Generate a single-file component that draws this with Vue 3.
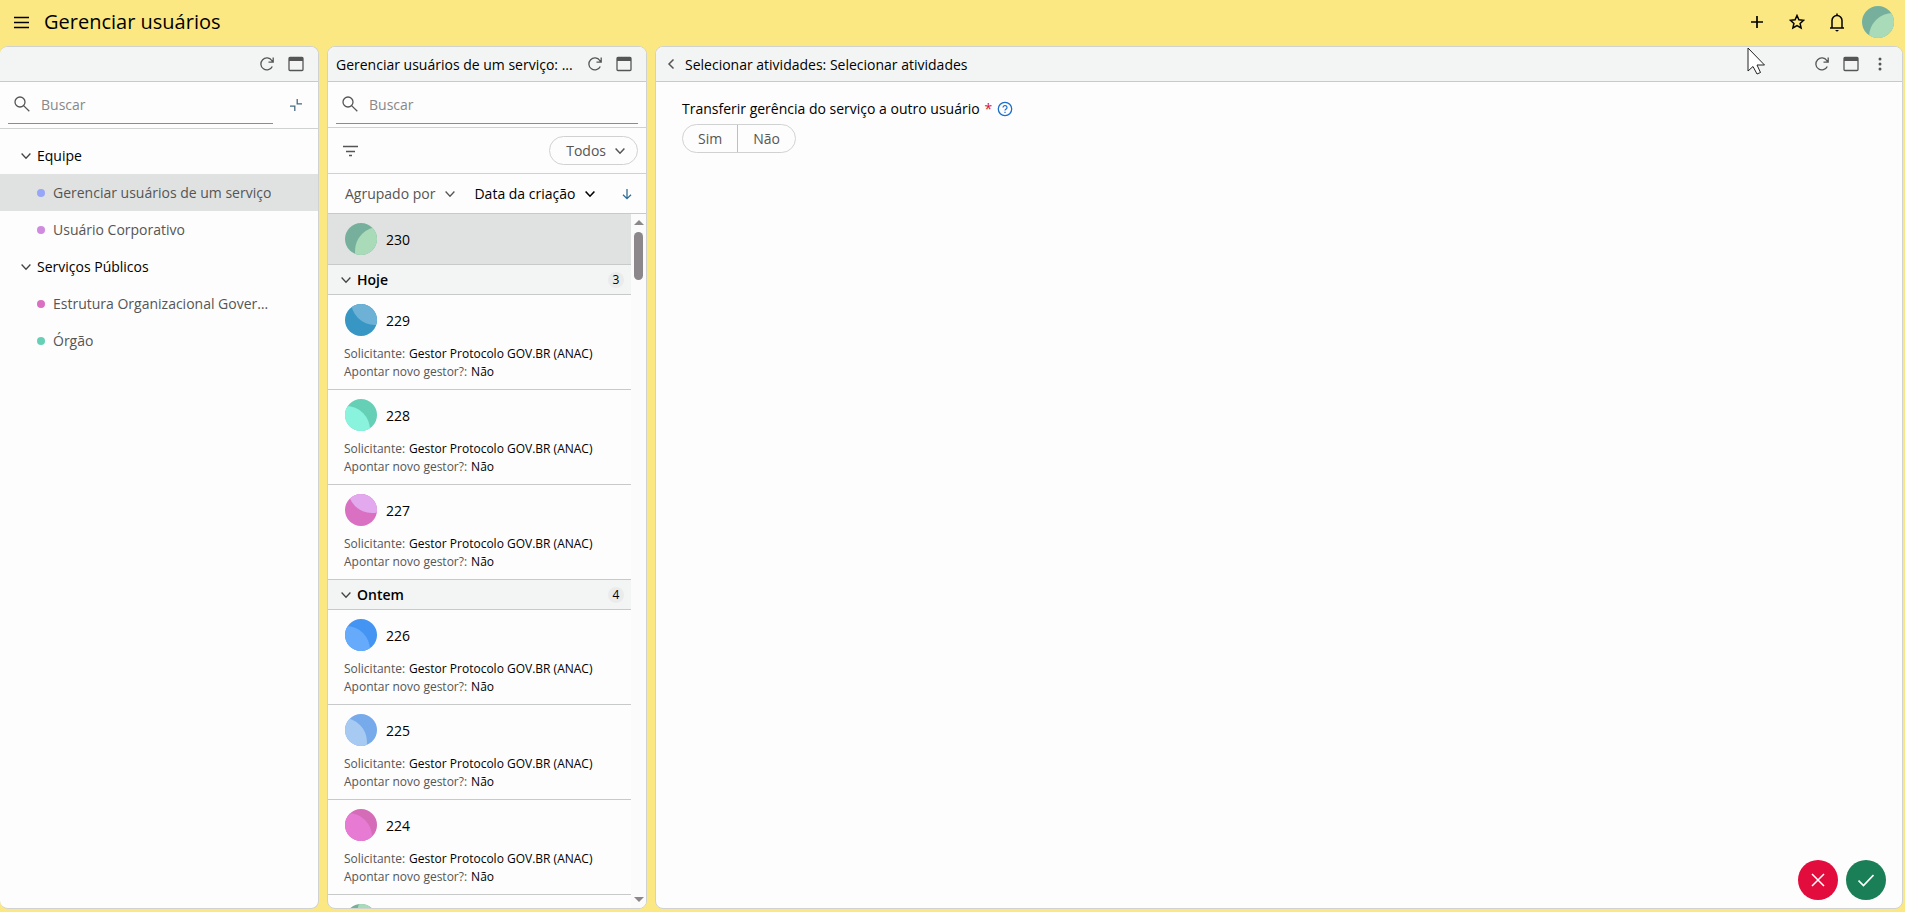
<script setup>

  import { ref } from 'vue';

  const treeSearch = ref('')
  const listSearch = ref('')
  const transfer = ref(null)
  const selectedService = ref('Gerenciar usuários de um serviço')

  const tree = ref([
    {
      name: 'Equipe',
      open: true,
      services: [
        { name: 'Gerenciar usuários de um serviço', color: '#97a6f8' },
        { name: 'Usuário Corporativo', color: '#cf8be0' }
      ]
    },
    {
      name: 'Serviços Públicos',
      open: true,
      services: [
        { name: 'Estrutura Organizacional Governamental', color: '#da70c2' },
        { name: 'Órgão', color: '#66d0b6' }
      ]
    }
  ])

  // x / y : centre of the lighter disc inside the avatar
  const current = { id: 230, dark: '#76b09d', light: '#a9dbb9', x: 34, y: 28 }

  const groups = ref([
    {
      name: 'Hoje',
      count: 3,
      open: true,
      items: [
        { id: 229, dark: '#3796c4', light: '#6eb1d6', x: 30, y: -3 },
        { id: 228, dark: '#66d0b6', light: '#8af3de', x: 1, y: 31 },
        { id: 227, dark: '#da70c2', light: '#e3a9ee', x: 27, y: -5 }
      ]
    },
    {
      name: 'Ontem',
      count: 4,
      open: true,
      items: [
        { id: 226, dark: '#4394f3', light: '#66abfb', x: 1, y: 31 },
        { id: 225, dark: '#76aaeb', light: '#a6caf1', x: -2, y: 28 },
        { id: 224, dark: '#d46cb8', light: '#e77ad3', x: 3, y: 28 },
        { id: 223, dark: '#76b09d', light: '#a9dbb9', x: 36, y: 10 }
      ]
    }
  ])

</script>

<template>

  <div class="app">

    <header class="topbar">
      <button class="icon-btn" aria-label="Menu">
        <svg width="16" height="16" viewBox="0 0 16 16"><path d="M0 3.500h15M0 8.500h15M0 13.500h15" /></svg>
      </button>
      <h1>Gerenciar usuários</h1>
      <nav class="top-actions">
        <button class="icon-btn" aria-label="Adicionar">
          <svg width="16" height="16" viewBox="0 0 16 16"><path d="M8 2v12M2 8h12" stroke-width="1.7" /></svg>
        </button>
        <button class="icon-btn" aria-label="Favoritos">
          <svg width="16" height="16" viewBox="0 0 16 16"><path d="M8 1.500L9.900 5.800l4.700.5-3.500 3.100 1 4.600L8 11.600 3.900 14l1-4.600L1.400 6.300l4.700-.5z" stroke-width="1.500" /></svg>
        </button>
        <button class="icon-btn" aria-label="Notificações">
          <svg width="16" height="20" viewBox="0 0 16 20"><path d="M1 16h14M3 16V8.500a5 5 0 0 1 10 0V16M8 3.500V1.500" stroke-width="1.500" /><path d="M6 18h4l-2 1.800z" fill="currentColor" stroke="none" /></svg>
        </button>
        <svg class="avatar" width="32" height="32" viewBox="0 0 32 32">
          <rect width="32" height="32" fill="#76b09d" />
          <circle cx="31" cy="31" r="24" fill="#a9dbb9" />
        </svg>
      </nav>
    </header>

    <main class="panels">

      <section class="panel panel-first">
        <div class="panel-head">
          <h2></h2>
          <button class="icon-btn" aria-label="Atualizar">
            <svg width="16" height="16" viewBox="0 0 16 16"><path d="M13.300 10.500A6 6 0 1 1 12.800 4.500L14 6M14.200 1.500V6.200H9.500" /></svg>
          </button>
          <button class="icon-btn" aria-label="Maximizar">
            <svg width="16" height="16" viewBox="0 0 16 16"><rect x="1" y="1.500" width="14" height="13" rx="1" /><path d="M1 3.200h14" stroke-width="3.500" /></svg>
          </button>
        </div>

        <div class="search-row">
          <label class="search">
            <svg width="16" height="16" viewBox="0 0 16 16"><circle cx="6" cy="6" r="5" /><path d="M9.600 9.600L15.300 15.300" /></svg>
            <input type="text" v-model="treeSearch" placeholder="Buscar" aria-label="Buscar serviço">
          </label>
          <button class="icon-btn collapse" aria-label="Recolher">
            <svg width="12" height="12" viewBox="0 0 12 12"><path d="M7.200 0v4.800H12M0 7.200h4.800V12" /></svg>
          </button>
        </div>

        <div class="tree">
          <div v-for="group in tree" :key="group.name">
            <button class="tree-group" v-on:click="group.open = !group.open">
              <svg width="10" height="10" viewBox="0 0 10 10"><path d="M.6 2.500L5 7.200l4.400-4.700" /></svg>
              {{ group.name }}
            </button>
            <template v-if="group.open">
              <button
              v-for="service in group.services"
              :key="service.name"
              class="tree-item"
              :class="{ 'tree-item-selected': service.name == selectedService }"
              v-on:click="selectedService = service.name"
              >
                <span class="dot" :style="{ backgroundColor: service.color }"></span>
                <span class="tree-name">{{ service.name }}</span>
              </button>
            </template>
          </div>
        </div>
      </section>

      <section class="panel">
        <div class="panel-head">
          <h2>Gerenciar usuários de um serviço: ...</h2>
          <button class="icon-btn" aria-label="Atualizar">
            <svg width="16" height="16" viewBox="0 0 16 16"><path d="M13.300 10.500A6 6 0 1 1 12.800 4.500L14 6M14.200 1.500V6.200H9.500" /></svg>
          </button>
          <button class="icon-btn" aria-label="Maximizar">
            <svg width="16" height="16" viewBox="0 0 16 16"><rect x="1" y="1.500" width="14" height="13" rx="1" /><path d="M1 3.200h14" stroke-width="3.500" /></svg>
          </button>
        </div>

        <div class="search-row">
          <label class="search">
            <svg width="16" height="16" viewBox="0 0 16 16"><circle cx="6" cy="6" r="5" /><path d="M9.600 9.600L15.300 15.300" /></svg>
            <input type="text" v-model="listSearch" placeholder="Buscar" aria-label="Buscar solicitação">
          </label>
        </div>

        <div class="filter-row">
          <button class="icon-btn" aria-label="Filtrar">
            <svg width="16" height="16" viewBox="0 0 16 16"><path d="M0 3.500h15M3 8.500h9M6 12.500h3" /></svg>
          </button>
          <button class="pill">
            Todos
            <svg width="10" height="10" viewBox="0 0 10 10"><path d="M.6 2.500L5 7.200l4.400-4.700" stroke-width="1.500" /></svg>
          </button>
        </div>

        <div class="sort-row">
          <button class="sort-btn">
            Agrupado por
            <svg width="10" height="10" viewBox="0 0 10 10"><path d="M.6 2.500L5 7.200l4.400-4.700" /></svg>
          </button>
          <button class="sort-btn sort-active">
            Data da criação
            <svg width="10" height="10" viewBox="0 0 10 10"><path d="M.6 2.500L5 7.200l4.400-4.700" stroke-width="1.600" /></svg>
          </button>
          <button class="icon-btn sort-dir" aria-label="Decrescente">
            <svg width="10" height="12" viewBox="0 0 10 12"><path d="M5 1v9.500M1 6.700l4 4 4-4" /></svg>
          </button>
        </div>

        <div class="list-wrap">
          <div class="list">
            <article class="item item-selected">
              <div class="item-title">
                <svg class="avatar" width="32" height="32" viewBox="0 0 32 32">
                  <rect width="32" height="32" :fill="current.dark" />
                  <circle :cx="current.x" :cy="current.y" r="24" :fill="current.light" />
                </svg>
                <span>{{ current.id }}</span>
              </div>
            </article>

            <template v-for="group in groups" :key="group.name">
              <button class="group-head" v-on:click="group.open = !group.open">
                <svg width="10" height="10" viewBox="0 0 10 10"><path d="M.6 2.500L5 7.200l4.400-4.700" /></svg>
                {{ group.name }}
                <span class="count">{{ group.count }}</span>
              </button>
              <template v-if="group.open">
                <article class="item" v-for="item in group.items" :key="item.id">
                  <div class="item-title">
                    <svg class="avatar" width="32" height="32" viewBox="0 0 32 32">
                      <rect width="32" height="32" :fill="item.dark" />
                      <circle :cx="item.x" :cy="item.y" r="24" :fill="item.light" />
                    </svg>
                    <span>{{ item.id }}</span>
                  </div>
                  <dl>
                    <div><dt>Solicitante:</dt><dd>Gestor Protocolo GOV.BR (ANAC)</dd></div>
                    <div><dt>Apontar novo gestor?:</dt><dd>Não</dd></div>
                  </dl>
                </article>
              </template>
            </template>
          </div>

          <div class="scrollbar">
            <div class="arrow-up"></div>
            <div class="thumb"></div>
            <div class="arrow-down"></div>
          </div>
        </div>
      </section>

      <section class="panel">
        <div class="panel-head">
          <button class="icon-btn" aria-label="Voltar">
            <svg width="16" height="16" viewBox="0 0 16 16"><path d="M9.500 3.500L5 8l4.500 4.500" stroke-width="1.500" /></svg>
          </button>
          <h2>Selecionar atividades: Selecionar atividades</h2>
          <button class="icon-btn" aria-label="Atualizar">
            <svg width="16" height="16" viewBox="0 0 16 16"><path d="M13.300 10.500A6 6 0 1 1 12.800 4.500L14 6M14.200 1.500V6.200H9.500" /></svg>
          </button>
          <button class="icon-btn" aria-label="Maximizar">
            <svg width="16" height="16" viewBox="0 0 16 16"><rect x="1" y="1.500" width="14" height="13" rx="1" /><path d="M1 3.200h14" stroke-width="3.500" /></svg>
          </button>
          <button class="icon-btn" aria-label="Mais opções">
            <svg width="16" height="16" viewBox="0 0 16 16"><g fill="currentColor" stroke="none"><circle cx="8" cy="3" r="1.500" /><circle cx="8" cy="8" r="1.500" /><circle cx="8" cy="13" r="1.500" /></g></svg>
          </button>
        </div>

        <form class="activity" v-on:submit.prevent>
          <fieldset>
            <legend>
              Transferir gerência do serviço a outro usuário
              <span class="required">*</span>
              <svg class="help" width="16" height="16" viewBox="0 0 16 16"><circle cx="8" cy="8" r="6.700" /><path d="M6 6.400a2 1.900 0 1 1 3 1.700Q8 8.700 8 9.600M8 10.800v1.200" stroke-width="1.200" /></svg>
            </legend>
            <div class="toggle">
              <label :class="{ 'toggle-on': transfer == 'sim' }">
                <input type="radio" name="transfer" value="sim" v-model="transfer">Sim
              </label>
              <label :class="{ 'toggle-on': transfer == 'nao' }">
                <input type="radio" name="transfer" value="nao" v-model="transfer">Não
              </label>
            </div>
          </fieldset>

          <div class="form-actions">
            <button type="button" class="fab fab-cancel" aria-label="Cancelar">
              <svg width="16" height="16" viewBox="0 0 16 16"><path d="M2 2l12 12M14 2L2 14" stroke-width="1.500" /></svg>
            </button>
            <button type="submit" class="fab fab-ok" aria-label="Confirmar">
              <svg width="16" height="16" viewBox="0 0 16 16"><path d="M.5 8.500L5.500 13.500 15.500 3" stroke-width="1.700" /></svg>
            </button>
          </div>
        </form>
      </section>

    </main>

    <svg class="cursor" width="20" height="29" viewBox="0 0 20 29">
      <path d="M1 1v23l5-4.500 4 7.500 3.500-1.500-3.500-7.500h7.500z" fill="#fff" stroke="#222" stroke-width="1" />
    </svg>

  </div>

</template>

<style>
  body {
    margin: 0;
  }
</style>

<style scoped>

  .app {
    position: relative;
    display: flex;
    flex-direction: column;
    height: 100vh;
    background-color: #fce883;
    color: #000;
    font-family: "Open Sans", "Noto Sans", sans-serif;
    font-size: 14px;
    line-height: 20px;

    & *, & *::before {
      box-sizing: border-box;
    }
  }

  h1, h2, dl, dd, fieldset {
    margin: 0;
    padding: 0;
    border: 0;
    font-weight: 400;
  }

  button {
    padding: 0;
    border: 0;
    background: none;
    font: inherit;
    color: inherit;
    cursor: pointer;
  }

  svg {
    flex: none;
    display: block;
    fill: none;
    stroke: currentColor;
    stroke-width: 1.3;
  }

  .icon-btn {
    display: flex;
    align-items: center;
    justify-content: center;
    flex: none;
    width: 16px;
    color: #555;
  }

  .avatar {
    border-radius: 50%;
    stroke: none;
  }

  .topbar {
    display: flex;
    align-items: center;
    gap: 14px;
    flex: none;
    height: 46px;
    padding: 0 11px 2px 14px;

    & .icon-btn {
      color: #000;
    }

    & h1 {
      flex: 1;
      font-size: 20px;
    }
  }

  .top-actions {
    display: flex;
    align-items: center;
    gap: 24px;

    & .avatar {
      margin-left: -7px;
    }
  }

  .panels {
    display: grid;
    grid-template-columns: 319px 320px minmax(0, 1fr);
    gap: 8px;
    flex: 1;
    min-height: 0;
    padding: 0 2px 3px 0;
  }

  .panel {
    display: flex;
    flex-direction: column;
    min-width: 0;
    min-height: 0;
    overflow: hidden;
    border: 1px solid #d0d2d1;
    border-radius: 8px;
    background-color: #fdfdfd;
  }

  .panel-first {
    border-left: 0;

    & .search-row {
      height: 47px;
      padding-left: 8px;
    }
  }

  .panel-head {
    display: flex;
    align-items: center;
    gap: 13px;
    flex: none;
    height: 35px;
    padding: 0 14px 0 8px;
    border-bottom: 1px solid #c8cac9;
    background-color: #f3f5f4;

    & h2 {
      flex: 1;
      min-width: 0;
      padding-top: 2px;
      overflow: hidden;
      white-space: nowrap;
      text-overflow: ellipsis;
      font-size: 14px;
    }

    & h2:not(:first-child) {
      margin-left: -8px;
    }
  }

  .search-row {
    display: flex;
    align-items: flex-start;
    flex: none;
    height: 46px;
    padding: 0 8px;
    border-bottom: 1px solid #d0d2d1;
  }

  .search {
    display: flex;
    align-items: center;
    gap: 11px;
    flex: 1;
    height: 42px;
    padding-top: 2px;
    padding-left: 6px;
    border-bottom: 1px solid #8c8c8c;
    color: #555;

    & input {
      flex: 1;
      min-width: 0;
      padding: 2px 0 0;
      border: 0;
      outline: 0;
      background: none;
      font: inherit;
    }

    & input::placeholder {
      color: #888;
      opacity: 1;
    }
  }

  .collapse {
    height: 46px;
    margin: 0 6px 0 15px;
    color: #456b80;
  }

  .tree {
    padding-top: 8px;
  }

  .tree-group, .tree-item {
    display: flex;
    align-items: center;
    width: 100%;
    height: 37px;
    text-align: left;
  }

  .tree-group {
    gap: 6px;
    padding-left: 21px;

    & svg {
      color: #444;
    }
  }

  .tree-item {
    gap: 8px;
    padding: 0 44px 0 37px;
    color: #555;
  }

  .tree-item-selected, .item-selected {
    background-color: #e0e2e1;
  }

  .tree-name {
    overflow: hidden;
    white-space: nowrap;
    text-overflow: ellipsis;
  }

  .dot {
    flex: none;
    width: 8px;
    height: 8px;
    border-radius: 50%;
  }

  .filter-row {
    display: flex;
    align-items: center;
    justify-content: space-between;
    flex: none;
    height: 46px;
    padding: 0 8px 0 15px;
    border-bottom: 1px solid #d0d2d1;
  }

  .pill {
    display: flex;
    align-items: center;
    gap: 9px;
    height: 29px;
    padding: 0 12px 0 16px;
    border: 1px solid #d0d2d1;
    border-radius: 15px;
    color: #555;
  }

  .sort-row {
    display: flex;
    align-items: center;
    gap: 19px;
    flex: none;
    height: 40px;
    padding: 0 11px 0 17px;
    border-bottom: 1px solid #c8cac9;
  }

  .sort-btn {
    display: flex;
    align-items: center;
    gap: 10px;
    white-space: nowrap;
    color: #555;
  }

  .sort-active {
    color: #000;
  }

  .sort-dir {
    margin-left: auto;
    color: #2f6f96;
  }

  .list-wrap {
    display: flex;
    flex: 1;
    min-height: 0;
  }

  .list {
    flex: 1;
    min-width: 0;
    overflow: hidden;
  }

  .item {
    padding: 9px 16px 8px;
    border-bottom: 1px solid #c8cac9;
  }

  .item-title {
    display: flex;
    align-items: center;
    gap: 9px;
    padding-left: 1px;

    & span {
      padding-top: 2px;
    }
  }

  .item dl {
    margin-top: 9px;
    font-size: 12px;
    line-height: 18px;

    & div {
      display: flex;
      gap: 4px;
    }

    & dt {
      color: #555;
    }
  }

  .item-selected {
    padding-bottom: 9px;
  }

  .group-head {
    display: flex;
    align-items: center;
    gap: 6px;
    width: 100%;
    height: 30px;
    padding: 0 7px 0 13px;
    border-bottom: 1px solid #c8cac9;
    background-color: #f3f5f4;
    font-weight: 600;

    & svg {
      color: #444;
    }
  }

  .count {
    width: 16px;
    height: 16px;
    margin-left: auto;
    border-radius: 50%;
    background-color: #ebebeb;
    font-size: 12px;
    font-weight: 400;
    line-height: 16px;
    text-align: center;
  }

  .scrollbar {
    display: flex;
    flex-direction: column;
    align-items: center;
    flex: none;
    width: 15px;
    padding: 6px 0;
    background-color: #fbfbfb;
  }

  .arrow-up, .arrow-down {
    border: 5px solid transparent;
  }

  .arrow-up {
    border-top: 0;
    border-bottom-color: #8b878a;
  }

  .arrow-down {
    margin-top: auto;
    border-bottom: 0;
    border-top-color: #8b878a;
  }

  .thumb {
    width: 9px;
    height: 48px;
    margin-top: 7px;
    border-radius: 5px;
    background-color: #8b878a;
  }

  .activity {
    display: flex;
    flex-direction: column;
    flex: 1;
    padding: 17px 16px 8px 26px;

    & legend {
      display: flex;
      align-items: center;
      gap: 5px;
      padding: 0;
      font-weight: 500;
    }
  }

  .required {
    color: #d3132f;
    font-weight: 400;
  }

  .help {
    color: #1c6fc9;
  }

  .toggle {
    display: inline-flex;
    height: 29px;
    margin-top: 5px;
    border: 1px solid #d0d2d1;
    border-radius: 15px;
    overflow: hidden;
    color: #555;

    & label {
      display: flex;
      align-items: center;
      padding: 0 15px;
      cursor: pointer;
    }

    & label + label {
      border-left: 1px solid #a5d0a8;
    }

    & input {
      position: absolute;
      opacity: 0;
      pointer-events: none;
    }

    & .toggle-on {
      background-color: #e0f0e2;
    }
  }

  .form-actions {
    display: flex;
    justify-content: flex-end;
    gap: 8px;
    margin-top: auto;
  }

  .fab {
    display: flex;
    align-items: center;
    justify-content: center;
    width: 40px;
    height: 40px;
    border-radius: 50%;
    color: #fff;
  }

  .fab-cancel {
    background-color: #e20c3d;
  }

  .fab-ok {
    background-color: #1a7f56;
  }

  .cursor {
    position: absolute;
    top: 47px;
    right: 138px;
    pointer-events: none;
  }

</style>
